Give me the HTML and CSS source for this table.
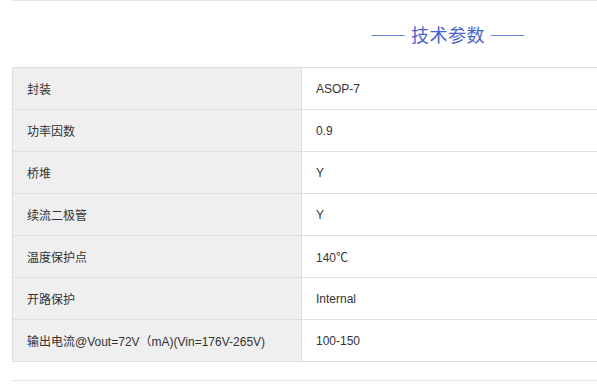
FILE: index.html
```html
<!DOCTYPE html>
<html lang="zh-CN">
<head>
<meta charset="utf-8">
<title>技术参数</title>
<link rel="stylesheet" href="styles.css">
</head>
<body>
<div class="page">
<div class="wrap">
  <h2 class="title">—— 技术参数 ——</h2>
  <table class="params">
    <tr><td class="k">封装</td><td class="v">ASOP-7</td></tr>
    <tr><td class="k">功率因数</td><td class="v">0.9</td></tr>
    <tr><td class="k">桥堆</td><td class="v">Y</td></tr>
    <tr><td class="k">续流二极管</td><td class="v">Y</td></tr>
    <tr><td class="k">温度保护点</td><td class="v">140℃</td></tr>
    <tr><td class="k">开路保护</td><td class="v">Internal</td></tr>
    <tr><td class="k">输出电流@Vout=72V（mA)(Vin=176V-265V)</td><td class="v">100-150</td></tr>
  </table>
  <div class="foot"></div>
</div>
</div>
</body>
</html>
```
FILE: styles.css
```css
html, body {
  margin: 0;
  padding: 0;
  background: #fff;
}
.page {
  width: 100%;
  height: 392px;
  overflow: hidden;
}
.wrap {
  margin-left: 12px;
  width: 872px;
  border-top: 1px solid #e3e3e3;
  font-family: "Liberation Sans", "Noto Sans CJK SC", sans-serif;
}
.title {
  margin: 0;
  height: 66px;
  display: flex;
  align-items: center;
  justify-content: center;
  font-family: "Noto Sans CJK SC", sans-serif;
  font-weight: normal;
  font-size: 18px;
  letter-spacing: 0.5px;
  color: #4862cf;
  padding-bottom: 1px;
  box-sizing: border-box;
}
.params {
  width: 100%;
  border-collapse: collapse;
  font-size: 12px;
  color: #333;
}
.params td {
  height: 42px;
  padding: 0 0 0 14px;
  border: 1px solid #dedede;
  box-sizing: border-box;
}
.params .k {
  width: 289px;
  background: #efefef;
}
.params .v {
  background: #fff;
}
.foot {
  margin-top: 18px;
  border-top: 1px solid #e3e3e3;
}
```
